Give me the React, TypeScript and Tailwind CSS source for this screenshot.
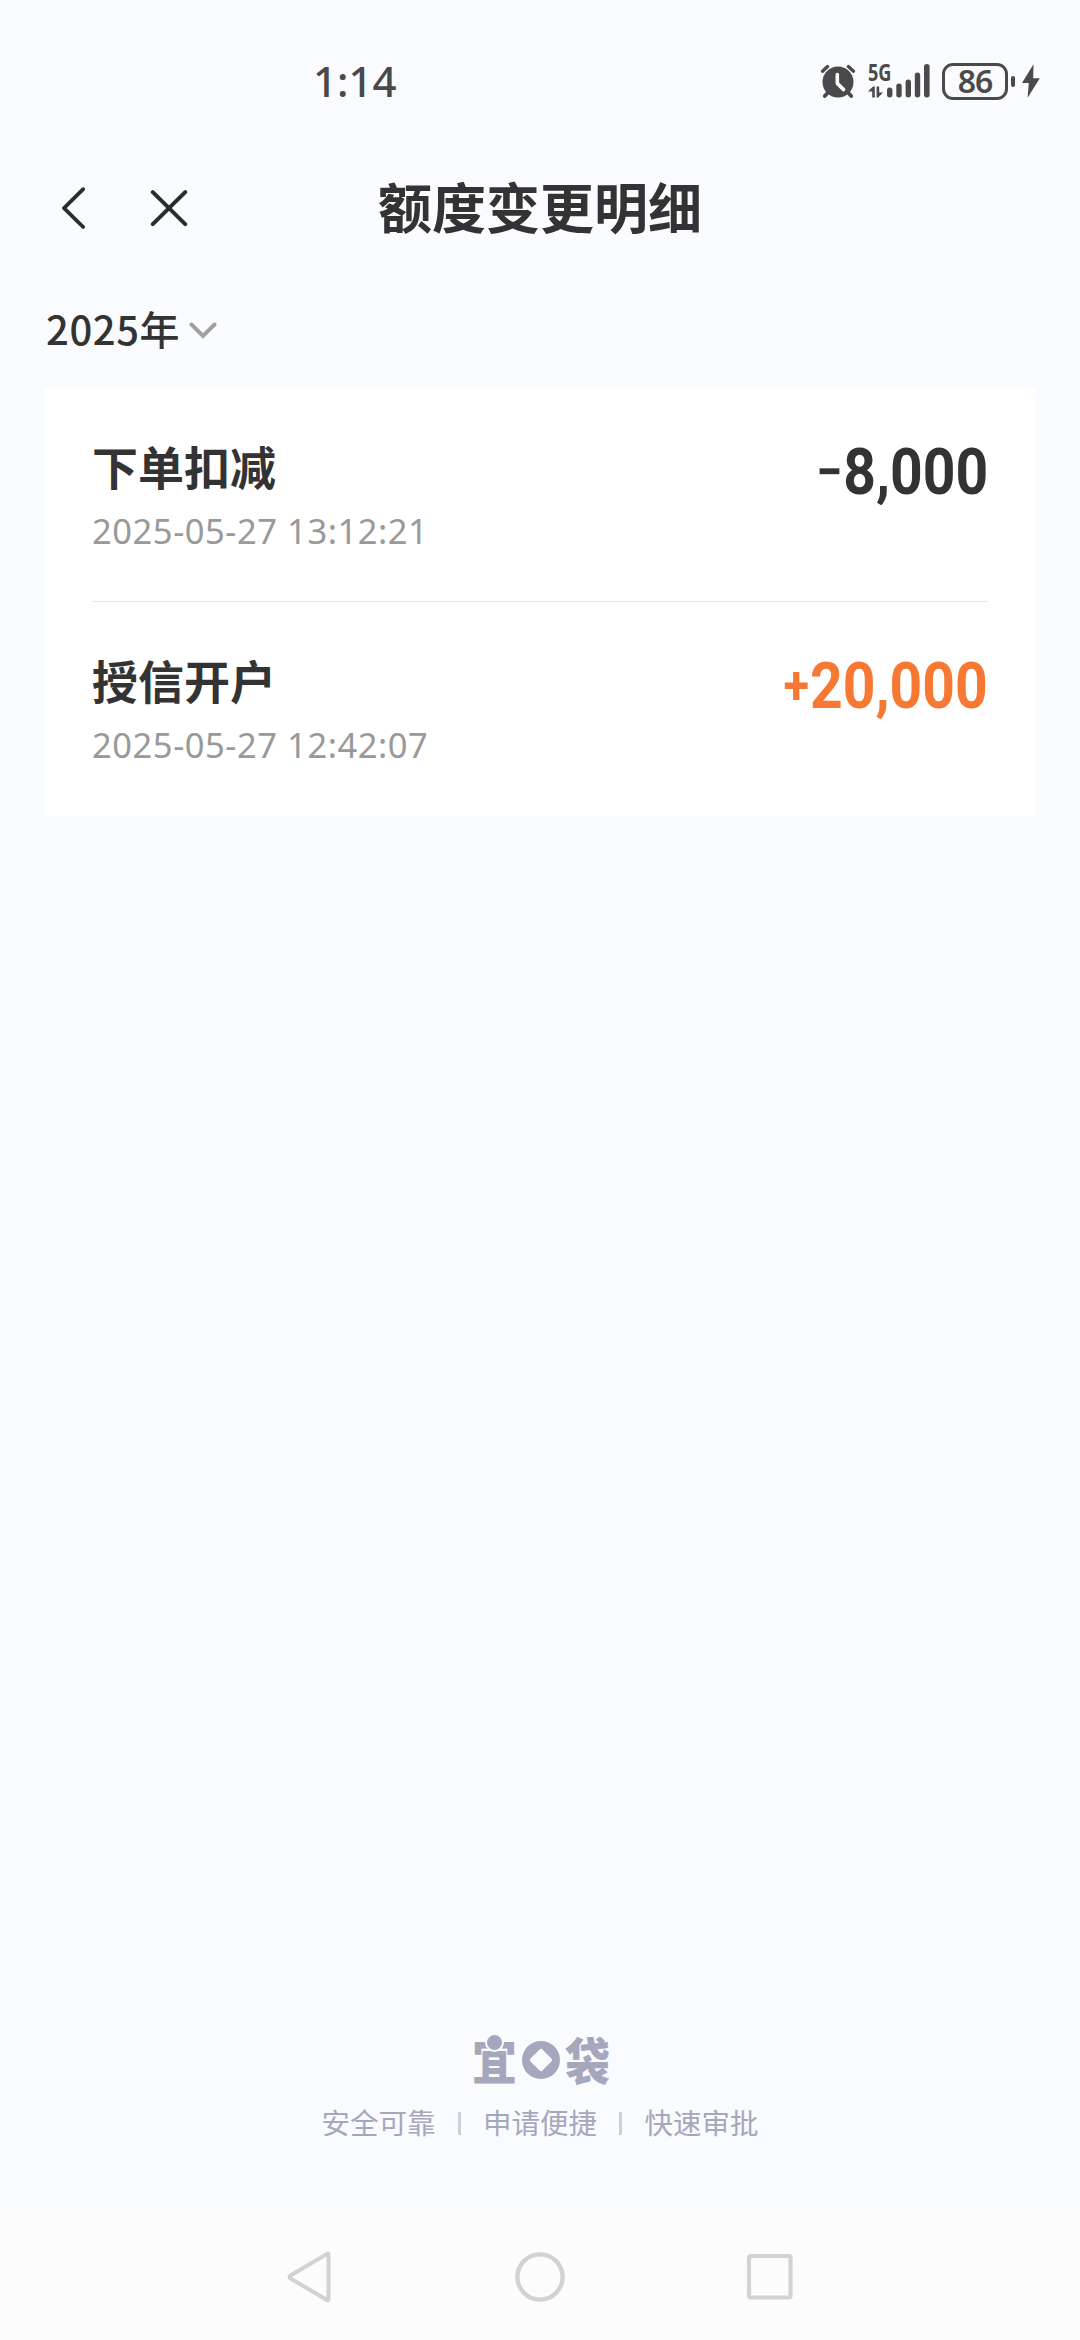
import React from "react";

type QuotaRecord = {
  title: string;
  time: string;
  sign: string;
  amount: string;
  income: boolean;
};

const records: QuotaRecord[] = [
  { title: "下单扣减", time: "2025-05-27 13:12:21", sign: "−", amount: "8,000", income: false },
  { title: "授信开户", time: "2025-05-27 12:42:07", sign: "+", amount: "20,000", income: true },
];

const slogans = ["安全可靠", "申请便捷", "快速审批"];

const AlarmIcon: React.FC = () => (
  <svg className="h-9 w-9" viewBox="0 0 36 36" fill="none" stroke="currentColor" strokeLinecap="round">
    <circle cx="18" cy="19" r="15.5" fill="currentColor" stroke="none" />
    <path d="M2.5 8.2 7.6 3.6M33.5 8.2 28.4 3.6" strokeWidth="3.4" />
    <path d="M8 29.5 4.8 33M28 29.5 31.2 33" strokeWidth="3.8" />
    <path d="M17.3 11.5V20.4L23.6 26.6" stroke="#fafbff" strokeWidth="3.6" strokeLinejoin="round" />
  </svg>
);

const SignalIcon: React.FC = () => (
  <svg className="h-9 w-16 overflow-visible" viewBox="0 0 64 36" fill="currentColor">
    <text
      x="0"
      y="18.2"
      fontSize="23.5"
      fontWeight="700"
      textLength="23.5"
      lengthAdjust="spacingAndGlyphs"
      className="font-['Noto_Sans',sans-serif]"
    >
      5G
    </text>
    <path d="M0 28.5 5 23.5H6.8V34.5H4.2V28.5ZM8.6 23.5H11.2V29.5H15L10.2 34.5H8.6Z" />
    <rect x="19" y="24.5" width="5.4" height="10" rx="2.7" />
    <rect x="28.3" y="20.5" width="5.4" height="14" rx="2.7" />
    <rect x="37.6" y="16.5" width="5.4" height="18" rx="2.7" />
    <rect x="46.8" y="9.5" width="5.4" height="25" rx="2.7" />
    <rect x="56" y="1" width="5.6" height="33.5" rx="2.7" />
  </svg>
);

const StatusBar: React.FC = () => (
  <div className="flex h-40 items-center justify-between pt-[2px] pr-10 pl-[313px] text-[#4a4a4a]">
    <span className="text-[42px] leading-[56px] font-medium">1:14</span>
    <div className="flex items-center">
      <AlarmIcon />
      <div className="ml-3">
        <SignalIcon />
      </div>
      <div className="ml-[10px] flex h-[37px] w-[66px] items-center justify-center rounded-[11px] border-3 border-[#4a4a4a] text-[32px] leading-none font-semibold tracking-[-1px]">
        86
      </div>
      <div className="ml-[3px] h-[11px] w-1 rounded-full bg-[#4a4a4a]" />
      <svg className="ml-[7px] h-[34px] w-[18px]" viewBox="0 0 18 34" fill="currentColor">
        <path d="M11.5.3 0 19h6.8L5.6 33.7 17.8 14.2h-6.6Z" />
      </svg>
    </div>
  </div>
);

const Header: React.FC = () => (
  <header className="flex h-[94px] items-center px-[60px] text-[#2b2c2e]">
    <div className="flex w-[240px] items-center gap-[62px]">
      <svg className="h-12 w-7" viewBox="0 0 28 48" fill="none" stroke="currentColor" strokeWidth="3.8" strokeLinecap="round" strokeLinejoin="round">
        <path d="M23.2 6.2 4 25.2 23.2 44" />
      </svg>
      <svg className="h-12 w-11" viewBox="0 0 44 48" fill="none" stroke="currentColor" strokeWidth="4" strokeLinecap="round">
        <path d="M2.8 9.2 35.2 41.2M35.2 9.2 2.8 41.2" />
      </svg>
    </div>
    <h1 className="flex-1 pt-[2px] text-center text-[54px] leading-none font-bold text-[#333]">额度变更明细</h1>
    <div className="w-[240px]" />
  </header>
);

const RecordRow: React.FC<{ record: QuotaRecord }> = ({ record }) => (
  <li className="flex h-[214px] items-start justify-between border-b border-[#e9e9e9] last:border-b-0">
    <div className="pt-[52px]">
      <div className="text-[46px] leading-[54px] font-bold text-[#333]">{record.title}</div>
      <div className="mt-[10px] text-[34.5px] leading-[54px] tracking-[0.55px] text-[#999]">{record.time}</div>
    </div>
    <div
      className={`flex origin-right scale-x-[0.885] items-center pt-[46px] font-['Roboto',sans-serif] text-[64.5px] leading-[76px] font-bold ${
        record.income ? "text-[#f77832]" : "text-[#333]"
      }`}
    >
      <span className="mr-px text-[53px]">{record.sign}</span>
      <span>{record.amount}</span>
    </div>
  </li>
);

const Brand: React.FC = () => (
  <div className="flex flex-col items-center text-[#a5a8bc]">
    <div className="flex h-[52px] items-center gap-[5px] pl-[2px] text-[45px] leading-none font-black">
      <div className="relative">
        <span className="block scale-y-[1.12]">宜</span>
        {/* round head of the figure in the wordmark */}
        <span className="absolute top-[-5px] left-[13px] h-[19px] w-[19px] rounded-full border-2 border-[#fafbff] bg-[#a5a8bc]" />
      </div>
      <svg className="h-[38px] w-[38px]" viewBox="0 0 38 38">
        <circle cx="19" cy="19" r="19" fill="currentColor" />
        <rect x="10.6" y="10.6" width="16.8" height="16.8" rx="2" transform="rotate(45 19 19)" fill="#fafbff" />
      </svg>
      <span className="scale-y-[1.12]">袋</span>
    </div>
    <div className="mt-[20px] flex items-center text-[28.5px] leading-[34px]">
      {slogans.map((text, i) => (
        <React.Fragment key={text}>
          {i > 0 && <span className="mx-[22.3px] h-[23px] w-[3px] bg-[#cfd0d9]" />}
          <span>{text}</span>
        </React.Fragment>
      ))}
    </div>
  </div>
);

const NavBar: React.FC = () => (
  <nav className="flex h-[126px] items-center justify-center gap-[178px] bg-[#fcfcfc]">
    <svg className="h-[52px] w-[52px]" viewBox="0 0 52 52" fill="none" stroke="#d2d2d2" strokeWidth="4" strokeLinejoin="round">
      <path d="M44.5 3.5V48.5Q44.5 50 43 49L6.5 27.5Q4.5 26 6.5 24.5L43 3Q44.5 2 44.5 3.5Z" />
    </svg>
    <svg className="h-[52px] w-[52px]" viewBox="0 0 52 52" fill="none" stroke="#d2d2d2" strokeWidth="4.4">
      <circle cx="26" cy="26" r="22.6" />
    </svg>
    <svg className="h-[52px] w-[52px]" viewBox="0 0 52 52" fill="none" stroke="#d2d2d2" strokeWidth="4.2">
      <rect x="5" y="5" width="41.5" height="41.5" rx="2" />
    </svg>
  </nav>
);

const App: React.FC = () => {
  return (
    <div className="flex h-[2340px] w-[1080px] flex-col overflow-hidden bg-[#fafbff] font-['Noto_Sans','Noto_Sans_CJK_SC',sans-serif]">
      <StatusBar />
      <Header />
      <div className="flex h-[134px] items-center gap-[9px] px-[46px] pt-[13px]">
        <span className="font-['Noto_Sans_CJK_SC',sans-serif] text-[40px] leading-[60px] font-medium tracking-[0.6px] text-[#333]">
          2025年
        </span>
        <svg className="mt-1 h-5 w-7" viewBox="0 0 28 20" fill="none" stroke="#a0a0a2" strokeWidth="4" strokeLinecap="round">
          <path d="M2.5 4.5 14 16 25.5 4.5" />
        </svg>
      </div>
      <ul className="mx-[45px] bg-white px-[47px]">
        {records.map((record) => (
          <RecordRow key={record.time} record={record} />
        ))}
      </ul>
      <div className="mt-auto pb-[74px]">
        <Brand />
      </div>
      <NavBar />
    </div>
  );
};

export default App;
